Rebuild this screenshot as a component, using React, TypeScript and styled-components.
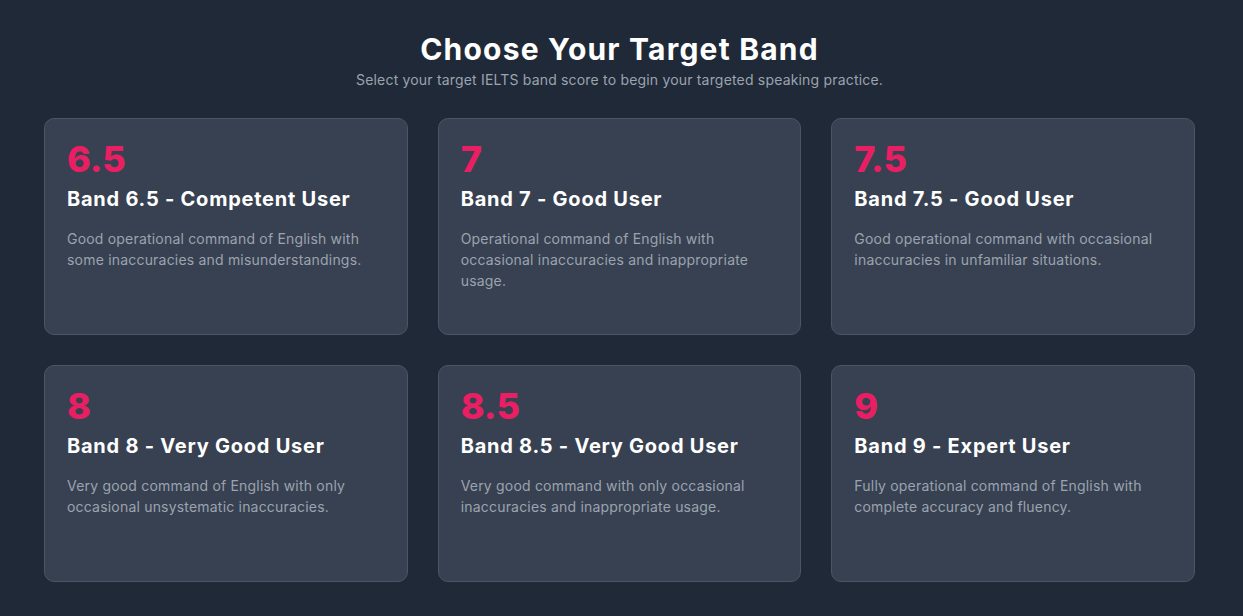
import React from "react";
import styled, { createGlobalStyle } from "styled-components";

const GlobalStyle = createGlobalStyle`
  html, body {
    margin: 0;
    padding: 0;
    background: #1f2937;
  }
  body {
    font-family: Inter, "Noto Sans", sans-serif;
    -webkit-font-smoothing: antialiased;
  }
  * { box-sizing: border-box; }
`;

const Page = styled.main`
  min-height: 616px;
  background: #1f2937;
  padding: 31px 48px 32px 44px;
`;

const Header = styled.header`
  text-align: center;
  margin-bottom: 28px;
`;

const Title = styled.h1`
  margin: 0;
  font-size: 30px;
  line-height: 36px;
  font-weight: 700;
  letter-spacing: 0.04em;
  color: #ffffff;
`;

const Subtitle = styled.p`
  margin: 3px 0 0;
  font-size: 14px;
  line-height: 20px;
  letter-spacing: 0.013em;
  color: #9ca3af;
`;

const Grid = styled.div`
  display: grid;
  grid-template-columns: repeat(3, 1fr);
  gap: 30px;
`;

const Card = styled.button`
  display: flex;
  flex-direction: column;
  align-items: flex-start;
  text-align: left;
  min-height: 217px;
  padding: 20px 22px;
  background: #374151;
  border: 1px solid #4b5563;
  border-radius: 10px;
  font-family: inherit;
  cursor: pointer;
`;

const Score = styled.div`
  font-size: 36px;
  line-height: 40px;
  font-weight: 800;
  color: #e91e63;
  margin-bottom: 6px;
`;

const CardTitle = styled.h2`
  margin: 0 0 15px;
  font-size: 20px;
  line-height: 28px;
  font-weight: 700;
  letter-spacing: 0.038em;
  color: #ffffff;
`;

const Description = styled.p`
  margin: 0;
  font-size: 14px;
  line-height: 21px;
  letter-spacing: 0.014em;
  color: #9ca3af;
`;

const bands = [
  {
    score: "6.5",
    title: "Band 6.5 - Competent User",
    desc: "Good operational command of English with some inaccuracies and misunderstandings.",
  },
  {
    score: "7",
    title: "Band 7 - Good User",
    desc: "Operational command of English with occasional inaccuracies and inappropriate usage.",
  },
  {
    score: "7.5",
    title: "Band 7.5 - Good User",
    desc: "Good operational command with occasional inaccuracies in unfamiliar situations.",
  },
  {
    score: "8",
    title: "Band 8 - Very Good User",
    desc: "Very good command of English with only occasional unsystematic inaccuracies.",
  },
  {
    score: "8.5",
    title: "Band 8.5 - Very Good User",
    desc: "Very good command with only occasional inaccuracies and inappropriate usage.",
  },
  {
    score: "9",
    title: "Band 9 - Expert User",
    desc: "Fully operational command of English with complete accuracy and fluency.",
  },
];

export default function App() {
  return (
    <>
      <GlobalStyle />
      <Page>
        <Header>
          <Title>Choose Your Target Band</Title>
          <Subtitle>
            Select your target IELTS band score to begin your targeted speaking practice.
          </Subtitle>
        </Header>
        <Grid>
          {bands.map((b) => (
            <Card key={b.score}>
              <Score>{b.score}</Score>
              <CardTitle>{b.title}</CardTitle>
              <Description>{b.desc}</Description>
            </Card>
          ))}
        </Grid>
      </Page>
    </>
  );
}
